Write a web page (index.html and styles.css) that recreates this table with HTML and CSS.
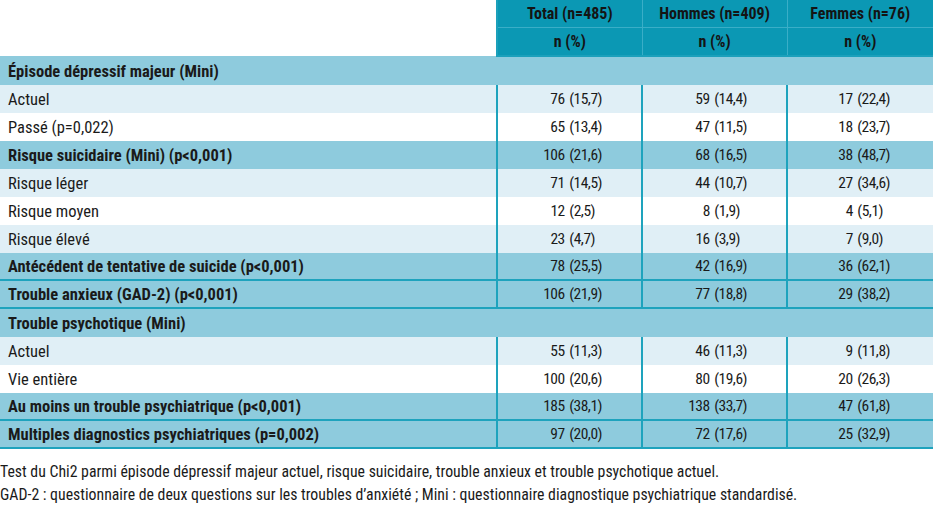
FILE: index.html
```html
<!DOCTYPE html>
<html lang="fr">
<head>
<meta charset="utf-8">
<title>Tableau</title>
<link rel="stylesheet" href="styles.css">
</head>
<body>
<table class="t">
  <colgroup>
    <col class="c1"><col class="c2"><col class="c3"><col class="c4">
  </colgroup>
  <thead>
    <tr class="h1"><th class="blank" rowspan="2"></th><th>Total (n=485)</th><th>Hommes (n=409)</th><th>Femmes (n=76)</th></tr>
    <tr class="h2"><th>n (%)</th><th>n (%)</th><th>n (%)</th></tr>
  </thead>
  <tbody>
    <tr class="sec"><td colspan="4">Épisode dépressif majeur (Mini)</td></tr>
    <tr class="lt"><td>Actuel</td><td class="n">76 (15,7)</td><td class="n">59 (14,4)</td><td class="n">17 (22,4)</td></tr>
    <tr class="wh"><td>Passé (p=0,022)</td><td class="n">65 (13,4)</td><td class="n">47 (11,5)</td><td class="n">18 (23,7)</td></tr>
    <tr class="sec"><td>Risque suicidaire (Mini) (p&lt;0,001)</td><td class="n">106 (21,6)</td><td class="n">68 (16,5)</td><td class="n">38 (48,7)</td></tr>
    <tr class="lt"><td>Risque léger</td><td class="n">71 (14,5)</td><td class="n">44 (10,7)</td><td class="n">27 (34,6)</td></tr>
    <tr class="wh"><td>Risque moyen</td><td class="n s">12 (2,5)</td><td class="n s">8 (1,9)</td><td class="n s">4 (5,1)</td></tr>
    <tr class="lt"><td>Risque élevé</td><td class="n s">23 (4,7)</td><td class="n s">16 (3,9)</td><td class="n s">7 (9,0)</td></tr>
    <tr class="sec b"><td>Antécédent de tentative de suicide (p&lt;0,001)</td><td class="n">78 (25,5)</td><td class="n">42 (16,9)</td><td class="n">36 (62,1)</td></tr>
    <tr class="sec b"><td>Trouble anxieux (GAD-2) (p&lt;0,001)</td><td class="n">106 (21,9)</td><td class="n">77 (18,8)</td><td class="n">29 (38,2)</td></tr>
    <tr class="sec"><td colspan="4">Trouble psychotique (Mini)</td></tr>
    <tr class="lt"><td>Actuel</td><td class="n">55 (11,3)</td><td class="n">46 (11,3)</td><td class="n">9 (11,8)</td></tr>
    <tr class="wh"><td>Vie entière</td><td class="n">100 (20,6)</td><td class="n">80 (19,6)</td><td class="n">20 (26,3)</td></tr>
    <tr class="sec b"><td>Au moins un trouble psychiatrique (p&lt;0,001)</td><td class="n">185 (38,1)</td><td class="n">138 (33,7)</td><td class="n">47 (61,8)</td></tr>
    <tr class="sec b"><td>Multiples diagnostics psychiatriques (p=0,002)</td><td class="n">97 (20,0)</td><td class="n">72 (17,6)</td><td class="n">25 (32,9)</td></tr>
  </tbody>
</table>
<div class="notes">
  <p>Test du Chi2 parmi épisode dépressif majeur actuel, risque suicidaire, trouble anxieux et trouble psychotique actuel.</p>
  <p>GAD-2 : questionnaire de deux questions sur les troubles d’anxiété ; Mini : questionnaire diagnostique psychiatrique standardisé.</p>
</div>
</body>
</html>
```

FILE: styles.css
```css
html, body {
  margin: 0;
  padding: 0;
  background: #ffffff;
}

body {
  font-family: "Roboto Condensed", "Liberation Sans Narrow", "Open Sans", Roboto, sans-serif;
  font-stretch: 75%;
  color: #1a1a1a;
}

.t {
  border-collapse: collapse;
  table-layout: fixed;
  width: 933px;
  font-size: 16.5px;
}

.c1 { width: 497px; }
.c2 { width: 145px; }
.c3 { width: 145px; }
.c4 { width: 146px; }

.t th {
  background: #0b98b4;
  font-weight: bold;
  font-size: 16px;
  text-align: center;
  height: 27px;
  padding: 0;
  border: 1px solid #3aaec7;
  color: #141414;
  white-space: nowrap;
}

.t th.blank {
  background: #ffffff;
  border: none;
  border-right: 2px solid #1ba0bb;
}

.t thead tr.h2 th {
  border-bottom: 2px solid #1ba0bb;
}

.t thead tr.h1 th {
  border-top: none;
}

.t thead tr.h1 th:last-child,
.t thead tr.h2 th:last-child {
  border-right: none;
}

.t td {
  height: 28px;
  padding: 0 0 0 8px;
  white-space: nowrap;
}

.t td.n {
  text-align: right;
  padding: 0 39px 0 0;
  border-left: 2px solid #1ea3bd;
  font-size: 15.5px;
  letter-spacing: -0.5px;
  word-spacing: 1.5px;
}

.t td.n.s {
  padding-right: 46px;
}

.t tr td:last-child.n {
  padding-right: 43px;
}

.t tr td:last-child.n.s {
  padding-right: 50px;
}

.t tr td:first-child {
  border-right: 2px solid #1ea3bd;
}

.t tr.sec td[colspan] {
  border-right: none;
}

.sec {
  background: #8ecbdd;
  font-weight: bold;
}

.sec td.n {
  font-weight: normal;
}

.lt {
  background: #e0eff6;
}

.wh {
  background: #ffffff;
}

.t tr.b td {
  height: 26px;
  border-bottom: 2px solid #1ea3bd;
}

.notes {
  padding-top: 11px;
  font-size: 15.8px;
  line-height: 23px;
}

.notes p {
  margin: 0;
  white-space: nowrap;
}
```
